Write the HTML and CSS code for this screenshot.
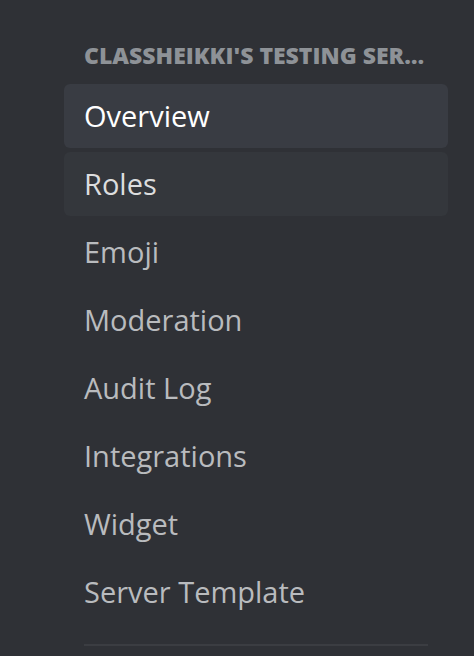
FILE: index.html
```html
<!DOCTYPE html>
<html lang="en">
<head>
<meta charset="utf-8">
<title>Server Settings</title>
<link rel="stylesheet" href="styles.css">
</head>
<body>
<nav class="sidebar">
  <div class="header">CLASSHEIKKI'S TESTING SERVER</div>
  <div class="item selected">Overview</div>
  <div class="item hover">Roles</div>
  <div class="item">Emoji</div>
  <div class="item">Moderation</div>
  <div class="item">Audit Log</div>
  <div class="item">Integrations</div>
  <div class="item">Widget</div>
  <div class="item">Server Template</div>
  <div class="separator"></div>
</nav>
</body>
</html>
```
FILE: styles.css
```css
html, body {
  margin: 0;
  padding: 0;
  background: #2f3136;
  height: 100%;
  overflow: hidden;
}
.sidebar {
  display: flex;
  flex-direction: column;
  padding: 36px 26px 0 64px;
  font-family: "Open Sans", "Noto Sans", sans-serif;
}
.header {
  padding: 0 20px;
  height: 38px;
  line-height: 38px;
  margin-bottom: 10px;
  font-size: 23px;
  font-weight: 800;
  color: #8e9297;
  white-space: nowrap;
  overflow: hidden;
  text-overflow: ellipsis;
}
.item {
  height: 64px;
  line-height: 63px;
  padding: 0 20px;
  margin-bottom: 4px;
  border-radius: 6px;
  font-size: 29px;
  font-weight: 500;
  color: #b9bbbe;
  white-space: nowrap;
}
.item.selected {
  background: #393c43;
  color: #ffffff;
}
.item.hover {
  background: #34373c;
  color: #dcddde;
}
.separator {
  height: 2px;
  margin: 16px 20px 0;
  background: #3b3d42;
}
```
